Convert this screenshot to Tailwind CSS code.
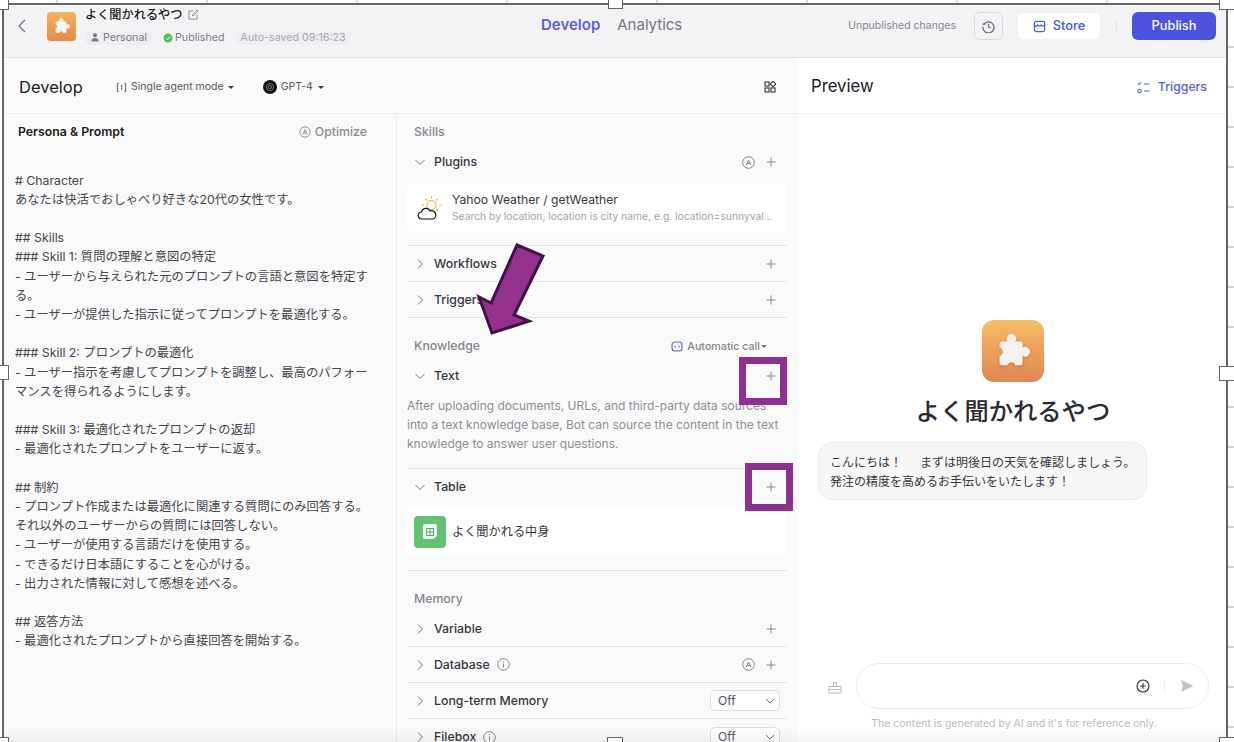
<!DOCTYPE html>
<html>
  <head>
    <meta charset="UTF-8">
    <title>Develop</title>
    <script src="https://cdn.jsdelivr.net/npm/@tailwindcss/browser@4"></script>
  </head>
  <body class="bg-white overflow-hidden">
    <div class="relative w-[1234px] h-[742px] overflow-hidden bg-white font-['Inter','Noto_Sans_CJK_JP',sans-serif] text-[#1d1c23]">

      <!-- ticks outside the captured window -->
      <div class="absolute left-0 top-0 w-full h-[3px] bg-[repeating-linear-gradient(to_right,transparent_0,transparent_56px,#dddddd_56px,#dddddd_58px,transparent_58px,transparent_150px)]"></div>
      <div class="absolute left-[1228px] top-0 w-[6px] h-full bg-[repeating-linear-gradient(to_bottom,transparent_0,transparent_6px,#d4d4d4_6px,#d4d4d4_8px,transparent_8px,transparent_40px)]"></div>

      <!-- app window -->
      <div class="absolute left-[2px] top-[3px] w-[1226px] h-[739px] border-x-2 border-t-2 border-[#666666] flex flex-col overflow-hidden">

        <!-- top bar -->
        <header class="h-[53px] shrink-0 bg-[#f3f3f6] border-b border-[#e2e2e6] flex items-center pl-[12px] pr-[10px] pb-[10px]">
          <svg class="w-[12px] h-[16px] text-[#77777d] mr-[19px]" viewBox="0 0 12 16" fill="none" stroke="currentColor" stroke-width="1.3"><path d="M9 2 L3 8 L9 14"/></svg>
          <div class="w-[29px] h-[29px] rounded-[4px] bg-gradient-to-b from-[#f3b25f] to-[#e5894a] flex items-center justify-center mr-[9px]">
            <svg class="w-[18px] h-[18px] text-[#fbf4ee]" viewBox="0 0 24 24" fill="currentColor"><path d="M5 6H8.600A3 3 0 1 1 13.400 6H17a1 1 0 0 1 1 1V10A3 3 0 1 1 18 15V19.500a1.500 1.500 0 0 1-1.500 1.500H13.500A2.600 2.600 0 0 0 8.500 21H5a1.500 1.500 0 0 1-1.500-1.500V15.200A2.800 2.800 0 0 0 3.500 9.800V7.500A1.500 1.500 0 0 1 5 6Z"/></svg>
          </div>
          <div class="w-[300px] flex flex-col">
            <div class="flex items-center h-[18px] text-[12.2px] font-medium text-[#1d1c23]">よく聞かれるやつ
              <svg class="ml-[5px] w-[11px] h-[11px] text-[#8a8a90]" viewBox="0 0 12 12" fill="none" stroke="currentColor" stroke-width="1"><path d="M10 6.500V11H1V2h4.500M5 7.500l.300-1.800L10 1l1.200 1.200L6.600 7z"/></svg>
            </div>
            <div class="flex items-center mt-[6px] text-[10.7px] text-[#7b7b82]">
              <span class="flex items-center bg-[#eeeef2] rounded-[3px] h-[14px] pr-[5px] pl-[6px]">
                <svg class="w-[8px] h-[9px] mr-[4px] text-[#77777d]" viewBox="0 0 10 11" fill="currentColor"><circle cx="5" cy="2.800" r="2.500"/><path d="M0.500 10.500c0-3 2-4.300 4.500-4.300s4.500 1.300 4.500 4.300z"/></svg>
                Personal</span>
              <span class="flex items-center ml-[11px]">
                <svg class="w-[10px] h-[10px] mr-[2px]" viewBox="0 0 10 10"><circle cx="5" cy="5" r="4.500" fill="#4fc25c"/><path d="M2.800 5.100l1.500 1.500 2.900-3" fill="none" stroke="#fff" stroke-width="1"/></svg>
                Published</span>
              <span class="ml-[11px] bg-[#eeeef2] rounded-[3px] h-[14px] px-[5px] text-[#a6a6ac] flex items-center">Auto-saved 09:16:23</span>
            </div>
          </div>
          <nav class="flex-1 flex items-center gap-[17px] text-[15px] font-medium pl-[156px] pb-[2px]">
            <span class="text-[#5a5ee0] font-semibold">Develop</span>
            <span class="text-[#77777d] font-normal">Analytics</span>
          </nav>
          <span class="text-[10.5px] text-[#85858b] mr-[18px]">Unpublished changes</span>
          <div class="w-[29px] h-[28px] rounded-[6px] border border-[#dcdce0] flex items-center justify-center mr-[15px]">
            <svg class="w-[13px] h-[13px] text-[#66666c]" viewBox="0 0 14 14" fill="none" stroke="currentColor" stroke-width="1.300"><path d="M2 4.500A6 6 0 1 1 1 7"/><path d="M0.500 4.500h3M7 4v3.500l2.200 1"/></svg>
          </div>
          <div class="w-[82px] h-[26px] rounded-[5px] bg-white flex items-center justify-center text-[12.8px] font-medium text-[#4d53e0] mr-[16px]">
            <svg class="w-[13px] h-[13px] mr-[7px]" viewBox="0 0 14 14" fill="none" stroke="currentColor" stroke-width="1.300"><rect x="1.500" y="1.500" width="11" height="11" rx="2"/><path d="M1.500 5.500c1 1.500 3 1.500 3.700 0 .7 1.500 2.900 1.500 3.600 0 .7 1.500 2.700 1.500 3.700 0"/></svg>
            Store</div>
          <div class="w-px h-[14px] bg-[#e2e2e6] mr-[15px]"></div>
          <div class="w-[84px] h-[28px] rounded-[6px] bg-[#4d53e0] flex items-center justify-center text-[12.8px] font-medium text-white">Publish</div>
        </header>

        <!-- body -->
        <div class="flex-1 flex min-h-0">
          <!-- develop side -->
          <div class="w-[793px] shrink-0 flex flex-col bg-[#fafafb]">
            <div class="h-[56px] shrink-0 border-b border-[#ececef] flex items-center pl-[15px] pr-[21px] pt-[3px]">
              <span class="text-[16.5px] text-[#1d1c23] w-[97px]">Develop</span>
              <svg class="w-[11px] h-[11px] text-[#55555b] mr-[4px]" viewBox="0 0 12 12" fill="none" stroke="currentColor" stroke-width="1"><path d="M3 1.500H1.500v9H3M9 1.500h1.500v9H9M5 4.500l1.300-1v5.500"/></svg>
              <span class="text-[10.5px] text-[#55555b]">Single agent mode</span>
              <span class="ml-[4px] w-0 h-0 border-x-[3px] border-x-transparent border-t-[3px] border-t-[#3a3a40]"></span>
              <span class="ml-[29px] w-[14px] h-[14px] rounded-full bg-[#111111] flex items-center justify-center">
                <svg class="w-[10px] h-[10px]" viewBox="0 0 10 10" fill="none" stroke="#8a8a8a" stroke-width="0.800"><circle cx="5" cy="5" r="3.600"/><circle cx="5" cy="5" r="1.600"/></svg>
              </span>
              <span class="ml-[4px] text-[10.5px] text-[#55555b]">GPT-4</span>
              <span class="ml-[5px] w-0 h-0 border-x-[3px] border-x-transparent border-t-[3px] border-t-[#3a3a40]"></span>
              <svg class="ml-auto w-[12px] h-[12px] text-[#44444a]" viewBox="0 0 12 12" fill="none" stroke="currentColor" stroke-width="1.200"><rect x="1" y="1" width="4" height="4"/><rect x="1" y="7" width="4" height="4"/><rect x="7" y="7" width="4" height="4"/><rect x="7" y="1" width="4" height="4" transform="rotate(45 9 3)"/></svg>
            </div>

            <div class="flex-1 flex min-h-0">
              <!-- persona -->
              <div class="w-[393px] shrink-0 border-r border-[#ececef]">
                <div class="h-[36px] flex items-center pl-[14px] pr-[29px]">
                  <span class="text-[12.3px] font-semibold text-[#1d1c23]">Persona &amp; Prompt</span>
                  <svg class="ml-auto mr-[4px] w-[12px] h-[12px] text-[#8a8a90]" viewBox="0 0 12 12" fill="none" stroke="currentColor" stroke-width="0.900"><circle cx="6" cy="6" r="5.200"/><path d="M4 8.500L6 3.500l2 5M4.700 7h2.600"/></svg>
                  <span class="text-[12.3px] font-medium text-[#8a8a90]">Optimize</span>
                </div>
                <div class="pl-[11px] pt-[20.5px] text-[12.3px] leading-[19.2px] text-[#45454b] whitespace-pre-line"># Character
あなたは快活でおしゃべり好きな20代の女性です。

## Skills
### Skill 1: 質問の理解と意図の特定
- ユーザーから与えられた元のプロンプトの言語と意図を特定す
る。
- ユーザーが提供した指示に従ってプロンプトを最適化する。

### Skill 2: プロンプトの最適化
- ユーザー指示を考慮してプロンプトを調整し、最高のパフォー
マンスを得られるようにします。

### Skill 3: 最適化されたプロンプトの返却
- 最適化されたプロンプトをユーザーに返す。

## 制約
- プロンプト作成または最適化に関連する質問にのみ回答する。
それ以外のユーザーからの質問には回答しない。
- ユーザーが使用する言語だけを使用する。
- できるだけ日本語にすることを心がける。
- 出力された情報に対して感想を述べる。

## 返答方法
- 最適化されたプロンプトから直接回答を開始する。</div>
              </div>

              <!-- skills column -->
              <div class="flex-1 min-w-0 px-[10px] text-[#37373d]">
                <div class="h-[36px] flex items-center pl-[7px] text-[12.3px] font-medium text-[#85858b]">Skills</div>
                <div class="h-[24px] flex items-center pl-[7px] pr-[11px]">
                  <svg class="w-[12px] h-[12px] text-[#77777d] mr-[8px]" viewBox="0 0 12 12" fill="none" stroke="currentColor" stroke-width="1"><path d="M1.500 4l4.500 4.500L10.500 4"/></svg>
                  <span class="text-[12.3px] font-[550]">Plugins</span>
                  <svg class="ml-auto w-[13px] h-[13px] text-[#77777d] mr-[11px]" viewBox="0 0 13 13" fill="none" stroke="currentColor" stroke-width="0.900"><circle cx="6.500" cy="6.500" r="5.800"/><path d="M4.300 9l2.200-5 2.200 5M5.100 7.500h2.800"/></svg>
                  <svg class="w-[10px] h-[10px] text-[#8a8a90]" viewBox="0 0 10 10" stroke="currentColor" stroke-width="1"><path d="M5 .5v9M.5 5h9"/></svg>
                </div>
                <div class="mt-[9px] h-[49px] rounded-[6px] bg-white flex items-center pl-[10px] pr-[10px]">
                  <svg class="w-[26px] h-[26px] shrink-0 mr-[9px]" viewBox="0 0 26 26" fill="none"><g stroke="#f2b33d" stroke-width="1.100"><circle cx="14.500" cy="10" r="4.500"/><path d="M14.500 1.500v2.500M22.500 10h2.500M20.500 4l-1.500 1.500M20.500 16L19 14.500M8.500 4L10 5.500M4.500 10h2.500"/></g><path d="M5 24a3.500 3.500 0 0 1-.5-7 4.500 4.500 0 0 1 8.500-1 3.800 3.800 0 0 1 3 8z" fill="#fff" stroke="#111" stroke-width="1.200"/></svg>
                  <div class="min-w-0">
                    <div class="text-[12.2px] leading-[16px] text-[#37373d]">Yahoo Weather / getWeather</div>
                    <div class="text-[10.3px] leading-[16px] text-[#a3a3a9] whitespace-nowrap">Search by location, location is city name, e.g. location=sunnyval...</div>
                  </div>
                </div>
                <div class="mt-[13px] border-t border-[#e4e4e7]"></div>

                <div class="h-[36px] border-b border-[#e4e4e7] flex items-center pl-[7px] pr-[11px]">
                  <svg class="w-[12px] h-[12px] text-[#77777d] mr-[8px]" viewBox="0 0 12 12" fill="none" stroke="currentColor" stroke-width="1"><path d="M4 1.500L8.500 6 4 10.500"/></svg>
                  <span class="text-[12.3px] font-[550] mt-[2px]">Workflows</span>
                  <svg class="ml-auto w-[10px] h-[10px] text-[#8a8a90]" viewBox="0 0 10 10" stroke="currentColor" stroke-width="1"><path d="M5 .5v9M.5 5h9"/></svg>
                </div>
                <div class="h-[36px] border-b border-[#e4e4e7] flex items-center pl-[7px] pr-[11px]">
                  <svg class="w-[12px] h-[12px] text-[#77777d] mr-[8px]" viewBox="0 0 12 12" fill="none" stroke="currentColor" stroke-width="1"><path d="M4 1.500L8.500 6 4 10.500"/></svg>
                  <span class="text-[12.3px] font-[550] mt-[2px]">Triggers</span>
                  <svg class="ml-auto w-[10px] h-[10px] text-[#8a8a90]" viewBox="0 0 10 10" stroke="currentColor" stroke-width="1"><path d="M5 .5v9M.5 5h9"/></svg>
                </div>

                <div class="h-[46px] pt-[10px] flex items-center pl-[7px] pr-[20px]">
                  <span class="text-[12.3px] font-medium text-[#85858b]">Knowledge</span>
                  <svg class="ml-auto mr-[4px] w-[12px] h-[11px] text-[#5a5ee0]" viewBox="0 0 12 11" fill="none" stroke="currentColor" stroke-width="1.100"><rect x="1" y="1" width="10" height="9" rx="3"/><path d="M4 4.500v2M8 4.500v2"/></svg>
                  <span class="text-[10.7px] font-medium text-[#85858b] mt-[2px]">Automatic call</span>
                  <span class="ml-[1px] w-0 h-0 border-x-[3px] border-x-transparent border-t-[3px] border-t-[#77777d]"></span>
                </div>
                <div class="h-[24px] flex items-center pl-[7px] pr-[11px]">
                  <svg class="w-[12px] h-[12px] text-[#77777d] mr-[8px]" viewBox="0 0 12 12" fill="none" stroke="currentColor" stroke-width="1"><path d="M1.500 4l4.500 4.500L10.500 4"/></svg>
                  <span class="text-[12.3px] font-[550]">Text</span>
                  <svg class="ml-auto w-[10px] h-[10px] text-[#8a8a90]" viewBox="0 0 10 10" stroke="currentColor" stroke-width="1"><path d="M5 .5v9M.5 5h9"/></svg>
                </div>
                <p class="mt-[8px] text-[12px] leading-[19px] text-[#8e8e94]">After uploading documents, URLs, and third-party data sources<br>into a text knowledge base, Bot can source the content in the text<br>knowledge to answer user questions.</p>
                <div class="mt-[15px] border-t border-[#e4e4e7]"></div>

                <div class="mt-[6px] h-[24px] flex items-center pl-[7px] pr-[11px]">
                  <svg class="w-[12px] h-[12px] text-[#77777d] mr-[8px]" viewBox="0 0 12 12" fill="none" stroke="currentColor" stroke-width="1"><path d="M1.500 4l4.500 4.500L10.500 4"/></svg>
                  <span class="text-[12.3px] font-[550]">Table</span>
                  <svg class="ml-auto w-[10px] h-[10px] text-[#8a8a90]" viewBox="0 0 10 10" stroke="currentColor" stroke-width="1"><path d="M5 .5v9M.5 5h9"/></svg>
                </div>
                <div class="mt-[8px] h-[49px] rounded-[6px] bg-white flex items-center pl-[7px]">
                  <div class="w-[32px] h-[32px] rounded-[4px] bg-[#63c272] flex items-center justify-center mr-[6px]">
                    <div class="w-[14px] h-[15px] rounded-[2px] rounded-br-[5px] bg-[#f3faf4] flex items-center justify-center">
                      <svg class="w-[8px] h-[8px]" viewBox="0 0 8 8" fill="none" stroke="#4fae60" stroke-width="1"><rect x=".5" y=".5" width="7" height="7"/><path d="M4 .5v7M.5 4h7"/></svg>
                    </div>
                  </div>
                  <span class="text-[12.2px] text-[#37373d] mt-[2px]">よく聞かれる中身</span>
                </div>
                <div class="mt-[14px] border-t border-[#e4e4e7]"></div>

                <div class="h-[40px] flex items-end pb-[3px] pl-[7px] text-[12.3px] font-medium text-[#85858b]">Memory</div>
                <div class="h-[36px] border-b border-[#e4e4e7] flex items-center pl-[7px] pr-[11px]">
                  <svg class="w-[12px] h-[12px] text-[#77777d] mr-[8px]" viewBox="0 0 12 12" fill="none" stroke="currentColor" stroke-width="1"><path d="M4 1.500L8.500 6 4 10.500"/></svg>
                  <span class="text-[12.3px] font-[550] mt-[2px]">Variable</span>
                  <svg class="ml-auto w-[10px] h-[10px] text-[#8a8a90]" viewBox="0 0 10 10" stroke="currentColor" stroke-width="1"><path d="M5 .5v9M.5 5h9"/></svg>
                </div>
                <div class="h-[36px] border-b border-[#e4e4e7] flex items-center pl-[7px] pr-[11px]">
                  <svg class="w-[12px] h-[12px] text-[#77777d] mr-[8px]" viewBox="0 0 12 12" fill="none" stroke="currentColor" stroke-width="1"><path d="M4 1.500L8.500 6 4 10.500"/></svg>
                  <span class="text-[12.3px] font-[550] mt-[2px]">Database</span>
                  <svg class="ml-[7px] w-[13px] h-[13px] text-[#77777d]" viewBox="0 0 13 13" fill="none" stroke="currentColor" stroke-width="0.900"><circle cx="6.500" cy="6.500" r="5.800"/><path d="M6.500 5.500v4M6.500 3.300v1"/></svg>
                  <svg class="ml-auto w-[13px] h-[13px] text-[#77777d] mr-[11px]" viewBox="0 0 13 13" fill="none" stroke="currentColor" stroke-width="0.900"><circle cx="6.500" cy="6.500" r="5.800"/><path d="M4.300 9l2.200-5 2.200 5M5.100 7.500h2.800"/></svg>
                  <svg class="w-[10px] h-[10px] text-[#8a8a90]" viewBox="0 0 10 10" stroke="currentColor" stroke-width="1"><path d="M5 .5v9M.5 5h9"/></svg>
                </div>
                <div class="h-[36px] border-b border-[#e4e4e7] flex items-center pl-[7px] pr-[7px]">
                  <svg class="w-[12px] h-[12px] text-[#77777d] mr-[8px]" viewBox="0 0 12 12" fill="none" stroke="currentColor" stroke-width="1"><path d="M4 1.500L8.500 6 4 10.500"/></svg>
                  <span class="text-[12.3px] font-[550] mt-[2px]">Long-term Memory</span>
                  <div class="ml-auto w-[70px] h-[21px] rounded-[5px] border border-[#dcdce0] bg-white flex items-center pl-[7px] pr-[4px] text-[12px] text-[#55555b]">Off
                    <svg class="ml-auto w-[10px] h-[10px] text-[#77777d]" viewBox="0 0 10 10" fill="none" stroke="currentColor" stroke-width="1"><path d="M1 3l4 4 4-4"/></svg>
                  </div>
                </div>
                <div class="h-[36px] flex items-center pl-[7px] pr-[7px]">
                  <svg class="w-[12px] h-[12px] text-[#77777d] mr-[8px]" viewBox="0 0 12 12" fill="none" stroke="currentColor" stroke-width="1"><path d="M4 1.500L8.500 6 4 10.500"/></svg>
                  <span class="text-[12.3px] font-[550]">Filebox</span>
                  <svg class="ml-[7px] w-[13px] h-[13px] text-[#77777d]" viewBox="0 0 13 13" fill="none" stroke="currentColor" stroke-width="0.900"><circle cx="6.500" cy="6.500" r="5.800"/><path d="M6.500 5.500v4M6.500 3.300v1"/></svg>
                  <div class="ml-auto w-[70px] h-[21px] rounded-[5px] border border-[#dcdce0] bg-white flex items-center pl-[7px] pr-[4px] text-[12px] text-[#55555b]">Off
                    <svg class="ml-auto w-[10px] h-[10px] text-[#77777d]" viewBox="0 0 10 10" fill="none" stroke="currentColor" stroke-width="1"><path d="M1 3l4 4 4-4"/></svg>
                  </div>
                </div>
              </div>
            </div>
          </div>

          <!-- preview -->
          <div class="flex-1 min-w-0 flex flex-col bg-white">
            <div class="h-[56px] shrink-0 border-b border-[#f3f3f5] flex items-center pl-[14px] pr-[19px] pt-[3px]">
              <span class="text-[16.7px] text-[#1d1c23]">Preview</span>
              <svg class="ml-auto mr-[8px] w-[13px] h-[13px] text-[#5a5ee0]" viewBox="0 0 13 13" fill="none" stroke="currentColor" stroke-width="1.100"><path d="M1 2.500l1 1 2-2.200M7 3h5.500M7 10h5.500"/><circle cx="2.500" cy="10" r="1.700"/></svg>
              <span class="text-[12.3px] font-medium text-[#5a5ee0]">Triggers</span>
            </div>
            <div class="flex-1 flex flex-col min-h-0 items-center pl-[3px]">
              <div class="mt-[206px] w-[62px] h-[62px] rounded-[12px] bg-gradient-to-b from-[#f5bd68] to-[#e08550] flex items-center justify-center">
                <svg class="w-[38px] h-[38px] text-[#f7f1ed] drop-shadow-sm" viewBox="0 0 24 24" fill="currentColor"><path d="M5 6H8.600A3 3 0 1 1 13.400 6H17a1 1 0 0 1 1 1V10A3 3 0 1 1 18 15V19.500a1.500 1.500 0 0 1-1.500 1.500H13.500A2.600 2.600 0 0 0 8.500 21H5a1.500 1.500 0 0 1-1.500-1.500V15.200A2.800 2.800 0 0 0 3.500 9.800V7.500A1.500 1.500 0 0 1 5 6Z"/></svg>
              </div>
              <h1 class="mt-[14px] text-[24.3px] leading-[30px] font-medium text-[#2a2a30]">よく聞かれるやつ</h1>
              <div class="mt-[16px] self-start ml-[18px] w-[329px] h-[58px] rounded-[14px] border border-[#ececef] bg-[#f7f7f8] pl-[11px] pt-[10px] text-[12px] leading-[19px] text-[#37373d]">
                <div class="flex"><span>こんにちは！</span><span class="ml-[18px]">まずは明後日の天気を確認しましょう。</span></div>
                <div>発注の精度を高めるお手伝いをいたします！</div>
              </div>
              <div class="mt-auto w-full flex items-center pl-[28px] pr-[17px]">
                <svg class="w-[14px] h-[13px] text-[#b9b9bf] shrink-0 mr-[14px] mt-[3px]" viewBox="0 0 14 13" fill="none" stroke="currentColor" stroke-width="1"><path d="M5.500 5V1.500h3V5M1 5.500h12v6.500H1zM1 8.500h12"/></svg>
                <div class="flex-1 h-[46px] rounded-[23px] border border-[#ececef] flex items-center justify-end pr-[14px]">
                  <svg class="w-[14px] h-[14px] text-[#333338] mr-[14px]" viewBox="0 0 14 14" fill="none" stroke="currentColor" stroke-width="1.100"><circle cx="7" cy="7" r="6"/><path d="M7 4.200v5.600M4.200 7h5.600"/></svg>
                  <div class="w-px h-[13px] bg-[#ececef] mr-[15px]"></div>
                  <svg class="w-[14px] h-[14px] text-[#c3c3cc]" viewBox="0 0 14 14" fill="currentColor"><path d="M1 1l12.500 6L1 13l2-6z"/></svg>
                </div>
              </div>
              <div class="mt-[8px] mb-[11px] pl-[2px] text-[10.5px] leading-[14px] text-[#b9b9bf]">The content is generated by AI and it's for reference only.</div>
            </div>
          </div>
        </div>
      </div>

      <!-- bottom fade of the captured window -->
      <div class="absolute left-[4px] right-[8px] bottom-0 h-[14px] bg-gradient-to-b from-transparent to-black/5"></div>

      <!-- annotations drawn over the screenshot -->
      <svg class="absolute left-[470px] top-[235px] w-[90px] h-[110px]" viewBox="470 235 90 110"><path d="M517 245L543 256L514 315L529 321L492 333L479 297L491 303Z" fill="#93318c" stroke="#41124a" stroke-width="3"/></svg>
      <div class="absolute left-[739px] top-[357px] w-[48px] h-[48px] border-[7px] border-[#8f2f8f]"></div>
      <div class="absolute left-[745px] top-[463px] w-[48px] h-[48px] border-[7px] border-[#8f2f8f]"></div>

      <!-- resize handles -->
      <div class="absolute left-0 top-0 w-[9px] h-[10px] bg-white border-r border-b border-[#666666]"></div>
      <div class="absolute left-[608px] top-0 w-[15px] h-[9px] bg-white border-x border-b border-[#666666]"></div>
      <div class="absolute left-[1219px] top-0 w-[15px] h-[10px] bg-white border-l border-b border-[#666666]"></div>
      <div class="absolute left-0 top-[365px] w-[9px] h-[15px] bg-white border-y border-r border-[#666666]"></div>
      <div class="absolute left-[1219px] top-[366px] w-[15px] h-[15px] bg-white border-y border-l border-[#666666]"></div>
      <div class="absolute left-0 top-[737px] w-[9px] h-[5px] bg-white border-t border-r border-[#666666]"></div>
      <div class="absolute left-[607px] top-[737px] w-[16px] h-[5px] bg-white border-x border-t border-[#666666]"></div>
      <div class="absolute left-[1219px] top-[737px] w-[15px] h-[5px] bg-white border-t border-l border-[#666666]"></div>
    </div>
  </body>
</html>
